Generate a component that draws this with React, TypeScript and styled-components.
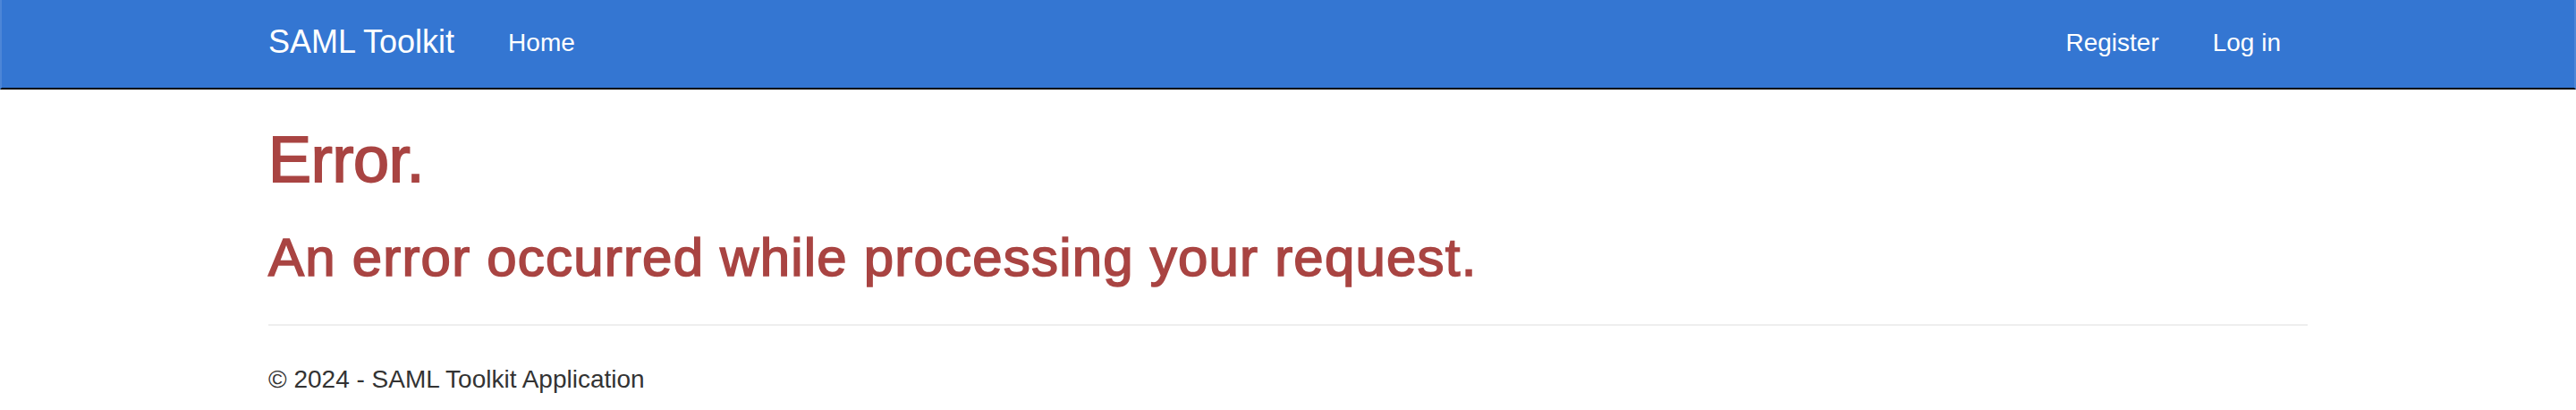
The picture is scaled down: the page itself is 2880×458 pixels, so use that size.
import React from "react";
import styled, { createGlobalStyle } from "styled-components";

const GlobalStyle = createGlobalStyle`
  html, body {
    margin: 0;
    padding: 0;
    background: #ffffff;
  }
  body {
    font-family: "Liberation Sans", Helvetica, Arial, sans-serif;
    font-size: 28px;
    line-height: 40px;
    color: #333333;
  }
  *, *::before, *::after {
    box-sizing: border-box;
  }
`;

const Navbar = styled.nav`
  box-sizing: content-box;
  height: 98px;
  background: #3476d2;
  border-bottom: 2px solid #000000;
  border-left: 2px solid rgba(255, 255, 255, 0.12);
  border-right: 2px solid rgba(255, 255, 255, 0.12);
`;

const Container = styled.div`
  width: 2340px;
  margin: 0 auto;
  padding: 0 30px;
`;

const NavInner = styled(Container)`
  height: 100%;
  display: flex;
  align-items: flex-start;
`;

const Brand = styled.a`
  display: block;
  margin-left: -30px;
  padding: 27px 30px 0;
  font-size: 36px;
  line-height: 40px;
  color: #ffffff;
  text-decoration: none;
`;

const NavList = styled.ul<{ $right?: boolean }>`
  display: flex;
  list-style: none;
  margin: 0;
  margin-left: ${(p) => (p.$right ? "auto" : "0")};
  padding: 0;
`;

const NavLink = styled.a`
  display: block;
  padding: 28px 30px 0;
  font-size: 28px;
  line-height: 40px;
  color: #ffffff;
  text-decoration: none;
`;

const Title = styled.h1`
  margin: 39px 0 0;
  font-size: 72px;
  line-height: 79.2px;
  font-weight: 400;
  letter-spacing: -0.3px;
  -webkit-text-stroke: 1.8px #a94442;
  color: #a94442;
`;

const Subtitle = styled.h2`
  margin: 37px 0 0;
  font-size: 60px;
  line-height: 66px;
  font-weight: 400;
  letter-spacing: 1.2px;
  -webkit-text-stroke: 1.6px #a94442;
  color: #a94442;
`;

const Divider = styled.hr`
  height: 0;
  margin: 41px 0 40px;
  border: 0;
  border-top: 2px solid #eeeeee;
`;

const FooterText = styled.p`
  margin: 0 0 20px;
  font-size: 28px;
  line-height: 40px;
  color: #333333;
`;

export default function App() {
  return (
    <>
      <GlobalStyle />
      <Navbar>
        <NavInner>
          <Brand href="#">SAML Toolkit</Brand>
          <NavList>
            <li>
              <NavLink href="#">Home</NavLink>
            </li>
          </NavList>
          <NavList $right>
            <li>
              <NavLink href="#">Register</NavLink>
            </li>
            <li>
              <NavLink href="#">Log in</NavLink>
            </li>
          </NavList>
        </NavInner>
      </Navbar>
      <Container as="main">
        <Title>Error.</Title>
        <Subtitle>An error occurred while processing your request.</Subtitle>
        <Divider />
        <footer>
          <FooterText>© 2024 - SAML Toolkit Application</FooterText>
        </footer>
      </Container>
    </>
  );
}
